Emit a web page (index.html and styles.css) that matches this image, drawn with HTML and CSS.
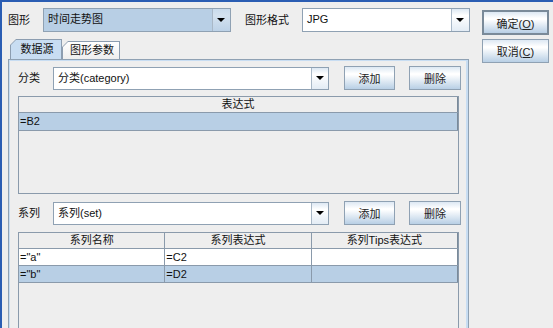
FILE: index.html
```html
<!DOCTYPE html>
<html lang="zh-CN">
<head>
    <meta charset="UTF-8">
    <title>图形</title>
    <link rel="stylesheet" href="styles.css">
</head>
<body>
    <div class="window">
        <div class="main">
            <div class="top-row">
                <span class="lbl lbl-shape">图形</span>
                <div class="combo combo-shape selected">
                    <span class="combo-text">时间走势图</span>
                    <span class="combo-arrow"></span>
                </div>
                <span class="lbl lbl-format">图形格式</span>
                <div class="combo combo-format">
                    <span class="combo-text">JPG</span>
                    <span class="combo-arrow"></span>
                </div>
            </div>

            <div class="tabs">
                <div class="tab active"><div class="tab-inner">数据源</div></div>
                <div class="tab"><div class="tab-inner">图形参数</div></div>
            </div>

            <div class="panel">
                <div class="field-row">
                    <span class="lbl lbl-field">分类</span>
                    <div class="combo combo-field">
                        <span class="combo-text">分类(category)</span>
                        <span class="combo-arrow"></span>
                    </div>
                    <button class="btn btn-add">添加</button>
                    <button class="btn btn-del">删除</button>
                </div>

                <div class="table table-category">
                    <div class="tr th-row">
                        <div class="th th-last">表达式</div>
                    </div>
                    <div class="tr row-selected">
                        <div class="td td-last">=B2</div>
                    </div>
                </div>

                <div class="field-row field-row-series">
                    <span class="lbl lbl-field">系列</span>
                    <div class="combo combo-field">
                        <span class="combo-text">系列(set)</span>
                        <span class="combo-arrow"></span>
                    </div>
                    <button class="btn btn-add">添加</button>
                    <button class="btn btn-del">删除</button>
                </div>

                <div class="table table-series">
                    <div class="tr th-row">
                        <div class="th">系列名称</div>
                        <div class="th">系列表达式</div>
                        <div class="th th-last">系列Tips表达式</div>
                    </div>
                    <div class="tr row-plain">
                        <div class="td">="a"</div>
                        <div class="td">=C2</div>
                        <div class="td td-last"></div>
                    </div>
                    <div class="tr row-selected">
                        <div class="td">="b"</div>
                        <div class="td">=D2</div>
                        <div class="td td-last"></div>
                    </div>
                </div>
            </div>
        </div>

        <div class="side">
            <button class="btn btn-default">确定(<u>O</u>)</button>
            <button class="btn btn-cancel">取消(<u>C</u>)</button>
        </div>
    </div>
</body>
</html>
```

FILE: styles.css
```css
* {
    margin: 0;
    padding: 0;
    box-sizing: border-box;
}

body {
    font-family: "Liberation Sans", "Noto Sans CJK SC", sans-serif;
    font-size: 11px;
    color: #111111;
    background-color: #eeeeee;
    width: 553px;
    height: 328px;
    overflow: hidden;
}

.window {
    display: flex;
    width: 553px;
    height: 328px;
    border-top: 2px solid #2a5db3;
    border-left: 2px solid #2a5db3;
    background-color: #eeeeee;
    overflow: hidden;
}

.main {
    width: 468px;
    padding: 6px 0 0 6px;
    display: flex;
    flex-direction: column;
}

/* top row */
.top-row {
    display: flex;
    align-items: center;
    height: 24px;
}

.lbl {
    line-height: 14px;
    white-space: nowrap;
}

.lbl-shape {
    width: 35px;
}

.lbl-format {
    width: 57px;
    margin-left: 14px;
}

.combo {
    display: flex;
    height: 24px;
    border: 1px solid #8fa1b3;
    background-color: #ffffff;
}

.combo.selected {
    background-color: #b8cfe5;
}

.combo-text {
    flex: 1;
    padding-left: 4px;
    line-height: 21px;
    white-space: nowrap;
    overflow: hidden;
}

.combo-arrow {
    position: relative;
    width: 18px;
    border-left: 1px solid #a9b8c7;
    background: linear-gradient(#dde8f3, #ffffff 30%, #e3ecf5);
}

.combo.selected .combo-arrow {
    background: linear-gradient(#c9dbec, #d4e2ef 30%, #bdd2e7);
}

.combo-arrow::after {
    content: "";
    position: absolute;
    left: 4px;
    top: 9px;
    border-left: 4px solid transparent;
    border-right: 4px solid transparent;
    border-top: 4px solid #000000;
}

.combo-shape {
    width: 188px;
}

.combo-format {
    width: 168px;
}

/* tabs */
.tabs {
    display: flex;
    align-items: flex-end;
    height: 20px;
    margin: 7px 0 0 2px;
}

.tab {
    width: 58px;
    height: 18px;
    padding: 1px 1px 0 1px;
    background-color: #8c9db0;
    clip-path: polygon(6px 0, 100% 0, 100% 100%, 0 100%, 0 6px);
}

.tab.active {
    width: 52px;
    height: 20px;
}

.tab-inner {
    height: 100%;
    background: linear-gradient(#ffffff, #eeeeee);
    clip-path: polygon(5px 0, 100% 0, 100% 100%, 0 100%, 0 5px);
    text-align: center;
    line-height: 17px;
    padding-left: 2px;
}

.tab.active .tab-inner {
    background-color: #c8ddf2;
    background-image: none;
    line-height: 19px;
}

/* panel */
.panel {
    width: 461px;
    height: 280px;
    border: 1px solid #8fa1b3;
    box-shadow: inset 1px 1px 0 #c8ddf2, inset -2px 0 0 #c8ddf2;
    padding: 6px 7px 0 9px;
}

.field-row {
    display: flex;
    align-items: center;
    height: 24px;
}

.field-row-series {
    margin-top: 7px;
}

.lbl-field {
    width: 35px;
}

.combo-field {
    width: 276px;
    height: 23px;
}

.combo-field .combo-text {
    line-height: 20px;
}

.combo-field .combo-arrow {
    width: 17px;
}

.combo-field .combo-arrow::after {
    top: 8px;
}

/* buttons */
.btn {
    font-family: inherit;
    font-size: 11px;
    color: #222222;
    border: 1px solid #8fa1b3;
    background: linear-gradient(#dde8f3, #ffffff 30%, #ffffff 35%, #b8cfe5);
    cursor: pointer;
}

.btn-add {
    width: 51px;
    height: 24px;
    margin-left: 15px;
}

.btn-del {
    width: 52px;
    height: 24px;
    margin-left: 14px;
}

.side {
    display: flex;
    flex-direction: column;
    padding: 8px 0 0 12px;
}

.btn-default {
    width: 67px;
    height: 25px;
    border: 2px solid #7a8a99;
}

.btn-cancel {
    width: 67px;
    height: 24px;
    margin-top: 4px;
}

.btn u {
    text-decoration: underline;
}

/* tables */
.table {
    width: 441px;
    margin-top: 6px;
    border: 1px solid #8a9aab;
    background-color: #eeeeee;
}

.table-category {
    height: 98px;
}

.table-series {
    height: 97px;
    margin-top: 7px;
}

.tr {
    display: flex;
    height: 17px;
    border-bottom: 1px solid #8a9aab;
}

.th-row {
    height: 16px;
    border-bottom: 1px solid #8a9aab;
}

.th, .td {
    flex: 1;
    border-right: 1px solid #8a9aab;
    line-height: 15px;
    white-space: nowrap;
    overflow: hidden;
}

.th {
    text-align: center;
}

.td {
    padding-left: 1px;
    line-height: 16px;
}

.th-last, .td-last {
    border-right: 1px solid #7a8a99;
}

.row-plain {
    background-color: #ffffff;
}

.row-selected {
    background-color: #b8cfe5;
}

.table-category .row-selected {
    height: 18px;
}
```
